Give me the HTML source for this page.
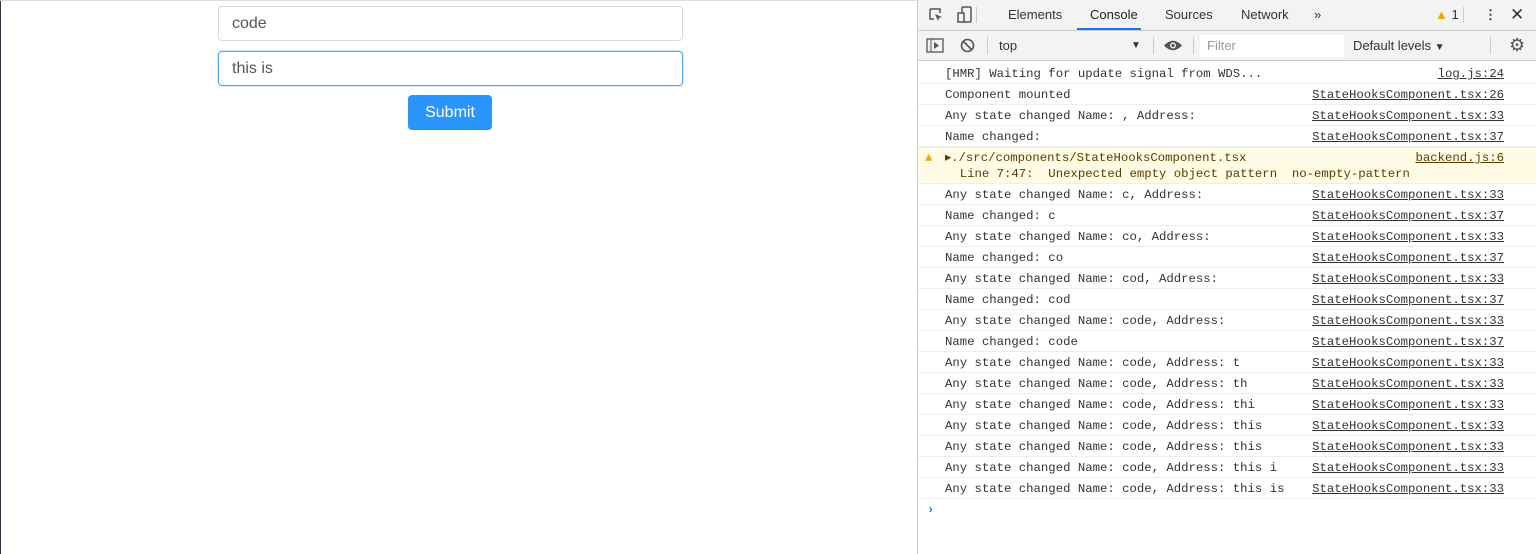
<!DOCTYPE html><html><head><style>
body{margin:0;width:1536px;height:554px;overflow:hidden;font-family:"Liberation Sans",sans-serif;background:#fff;position:relative}
.inp{position:absolute;left:218px;width:465px;height:35px;border:1px solid #d9d9d9;border-radius:4px;box-sizing:border-box;font-size:16px;color:#555;padding-left:13px;line-height:33px}
.btn{position:absolute;left:408px;top:95px;width:84px;height:35px;background:#2a95fb;border-radius:4px;color:#fff;font-size:16px;text-align:center;line-height:35px}
#dt{position:absolute;left:917px;top:0;width:619px;height:554px;border-left:1px solid #ccc;background:#fff;font-size:13px;color:#333}
.bar{position:absolute;left:0;width:619px;background:#f3f3f3;border-bottom:1px solid #ccc}
.t{position:absolute;top:0;line-height:30px;color:#333}
.row{position:absolute;left:0;width:619px;height:21px;border-bottom:1px solid #eee;font-family:"Liberation Mono",monospace;font-size:12.3px;line-height:23px;box-sizing:border-box}
.row .m{position:absolute;left:27px}
.row .s{position:absolute;right:33px;text-decoration:underline;color:#333}
</style></head><body>
<div style="position:absolute;left:0;top:0;width:1px;height:554px;background:#334"></div>
<div style="position:absolute;left:0;top:0;width:917px;height:1px;background:#ddd"></div>
<div class="inp" style="top:6px">code</div>
<div class="inp" style="top:51px;border-color:#4aa3ff;box-shadow:0 0 0 1px rgba(60,150,255,.2)">this is</div>
<div class="btn">Submit</div>
<div id="dt">
<div class="bar" style="top:0;height:30px">
<svg style="position:absolute;left:10px;top:7px" width="16" height="16"><path d="M2 2h10v4M2 2v10h4" stroke="#555" fill="none" stroke-width="1.5"/><path d="M7 7l7 3-3 1-1 3z" fill="#555"/></svg>
<svg style="position:absolute;left:39px;top:6px" width="16" height="18"><rect x="5" y="1" width="9" height="15" rx="1" stroke="#555" fill="none" stroke-width="1.5"/><rect x="1" y="7" width="6" height="9" stroke="#555" fill="#f3f3f3" stroke-width="1.5"/></svg>
<div style="position:absolute;left:58px;top:7px;width:1px;height:16px;background:#ccc"></div>
<span class="t" style="left:90px">Elements</span>
<span class="t" style="left:172px;color:#222">Console</span>
<div style="position:absolute;left:159px;top:28px;width:64px;height:2px;background:#1a73e8"></div>
<span class="t" style="left:247px">Sources</span>
<span class="t" style="left:323px">Network</span>
<span class="t" style="left:396px">»</span>
<span class="t" style="left:517px;font-size:13px"><span style="color:#f0a800">▲</span> 1</span>
<div style="position:absolute;left:545px;top:7px;width:1px;height:16px;background:#ccc"></div>
<span class="t" style="left:566px;font-weight:bold">⋮</span>
<span class="t" style="left:592px;font-size:17px">✕</span>
</div>
<div class="bar" style="top:31px;height:29px">
<svg style="position:absolute;left:8px;top:7px" width="18" height="15"><rect x="1" y="1" width="16" height="13" stroke="#555" fill="none" stroke-width="1.3"/><path d="M5 1v13" stroke="#555"/><path d="M8 4l5 3.5-5 3.5z" fill="#555"/></svg>
<svg style="position:absolute;left:42px;top:7px" width="15" height="15"><circle cx="7.5" cy="7.5" r="6" stroke="#555" fill="none" stroke-width="1.6"/><path d="M3.5 3.5l8 8" stroke="#555" stroke-width="1.6"/></svg>
<div style="position:absolute;left:69px;top:6px;width:1px;height:17px;background:#ccc"></div>
<span class="t" style="left:81px;line-height:29px">top</span>
<span class="t" style="left:213px;line-height:29px;font-size:10px">▼</span>
<div style="position:absolute;left:235px;top:6px;width:1px;height:17px;background:#ccc"></div>
<svg style="position:absolute;left:245px;top:8px" width="20" height="13"><path d="M1 6.5Q10 -3 19 6.5Q10 16 1 6.5z" fill="#555"/><circle cx="10" cy="6.5" r="3" fill="#f3f3f3"/><circle cx="10" cy="6.5" r="1.6" fill="#555"/></svg>
<div style="position:absolute;left:275px;top:6px;width:1px;height:17px;background:#ccc"></div>
<div style="position:absolute;left:282px;top:4px;width:144px;height:22px;background:#fff"></div>
<span class="t" style="left:289px;line-height:29px;color:#999">Filter</span>
<span class="t" style="left:435px;line-height:29px">Default levels <span style="font-size:10px">▼</span></span>
<div style="position:absolute;left:572px;top:6px;width:1px;height:17px;background:#ccc"></div>
<span class="t" style="left:591px;line-height:29px;font-size:18px;color:#555">⚙</span>
</div>
<div style="position:absolute;top:63px;left:0;width:619px">
<div class="row" style="position:relative"><span class="m">[HMR] Waiting for update signal from WDS...</span><span class="s">log.js:24</span></div>
<div class="row" style="position:relative"><span class="m">Component mounted</span><span class="s">StateHooksComponent.tsx:26</span></div>
<div class="row" style="position:relative"><span class="m">Any state changed Name: , Address:</span><span class="s">StateHooksComponent.tsx:33</span></div>
<div class="row" style="position:relative"><span class="m">Name changed:</span><span class="s">StateHooksComponent.tsx:37</span></div>
<div class="row" style="position:relative;height:37px;background:#fffbe5;border-top:1px solid #fff0b3;border-bottom:1px solid #fff0b3;color:#5c3c00;line-height:16px;padding-top:2px"><span style="position:absolute;left:7px;color:#f0a800">▲</span><span class="m" style="left:27px">▸./src/components/StateHooksComponent.tsx<br>&nbsp; Line 7:47:&nbsp; Unexpected empty object pattern&nbsp; no-empty-pattern</span><span class="s" style="color:#5c3c00">backend.js:6</span></div>
<div class="row" style="position:relative"><span class="m">Any state changed Name: c, Address:</span><span class="s">StateHooksComponent.tsx:33</span></div>
<div class="row" style="position:relative"><span class="m">Name changed: c</span><span class="s">StateHooksComponent.tsx:37</span></div>
<div class="row" style="position:relative"><span class="m">Any state changed Name: co, Address:</span><span class="s">StateHooksComponent.tsx:33</span></div>
<div class="row" style="position:relative"><span class="m">Name changed: co</span><span class="s">StateHooksComponent.tsx:37</span></div>
<div class="row" style="position:relative"><span class="m">Any state changed Name: cod, Address:</span><span class="s">StateHooksComponent.tsx:33</span></div>
<div class="row" style="position:relative"><span class="m">Name changed: cod</span><span class="s">StateHooksComponent.tsx:37</span></div>
<div class="row" style="position:relative"><span class="m">Any state changed Name: code, Address:</span><span class="s">StateHooksComponent.tsx:33</span></div>
<div class="row" style="position:relative"><span class="m">Name changed: code</span><span class="s">StateHooksComponent.tsx:37</span></div>
<div class="row" style="position:relative"><span class="m">Any state changed Name: code, Address: t</span><span class="s">StateHooksComponent.tsx:33</span></div>
<div class="row" style="position:relative"><span class="m">Any state changed Name: code, Address: th</span><span class="s">StateHooksComponent.tsx:33</span></div>
<div class="row" style="position:relative"><span class="m">Any state changed Name: code, Address: thi</span><span class="s">StateHooksComponent.tsx:33</span></div>
<div class="row" style="position:relative"><span class="m">Any state changed Name: code, Address: this</span><span class="s">StateHooksComponent.tsx:33</span></div>
<div class="row" style="position:relative"><span class="m">Any state changed Name: code, Address: this</span><span class="s">StateHooksComponent.tsx:33</span></div>
<div class="row" style="position:relative"><span class="m">Any state changed Name: code, Address: this i</span><span class="s">StateHooksComponent.tsx:33</span></div>
<div class="row" style="position:relative"><span class="m">Any state changed Name: code, Address: this is</span><span class="s">StateHooksComponent.tsx:33</span></div>
<div class="row" style="position:relative;border:0"><span style="position:absolute;left:9px;color:#1a73e8;font-weight:bold">›</span></div>
</div>
</div>
</body></html>
